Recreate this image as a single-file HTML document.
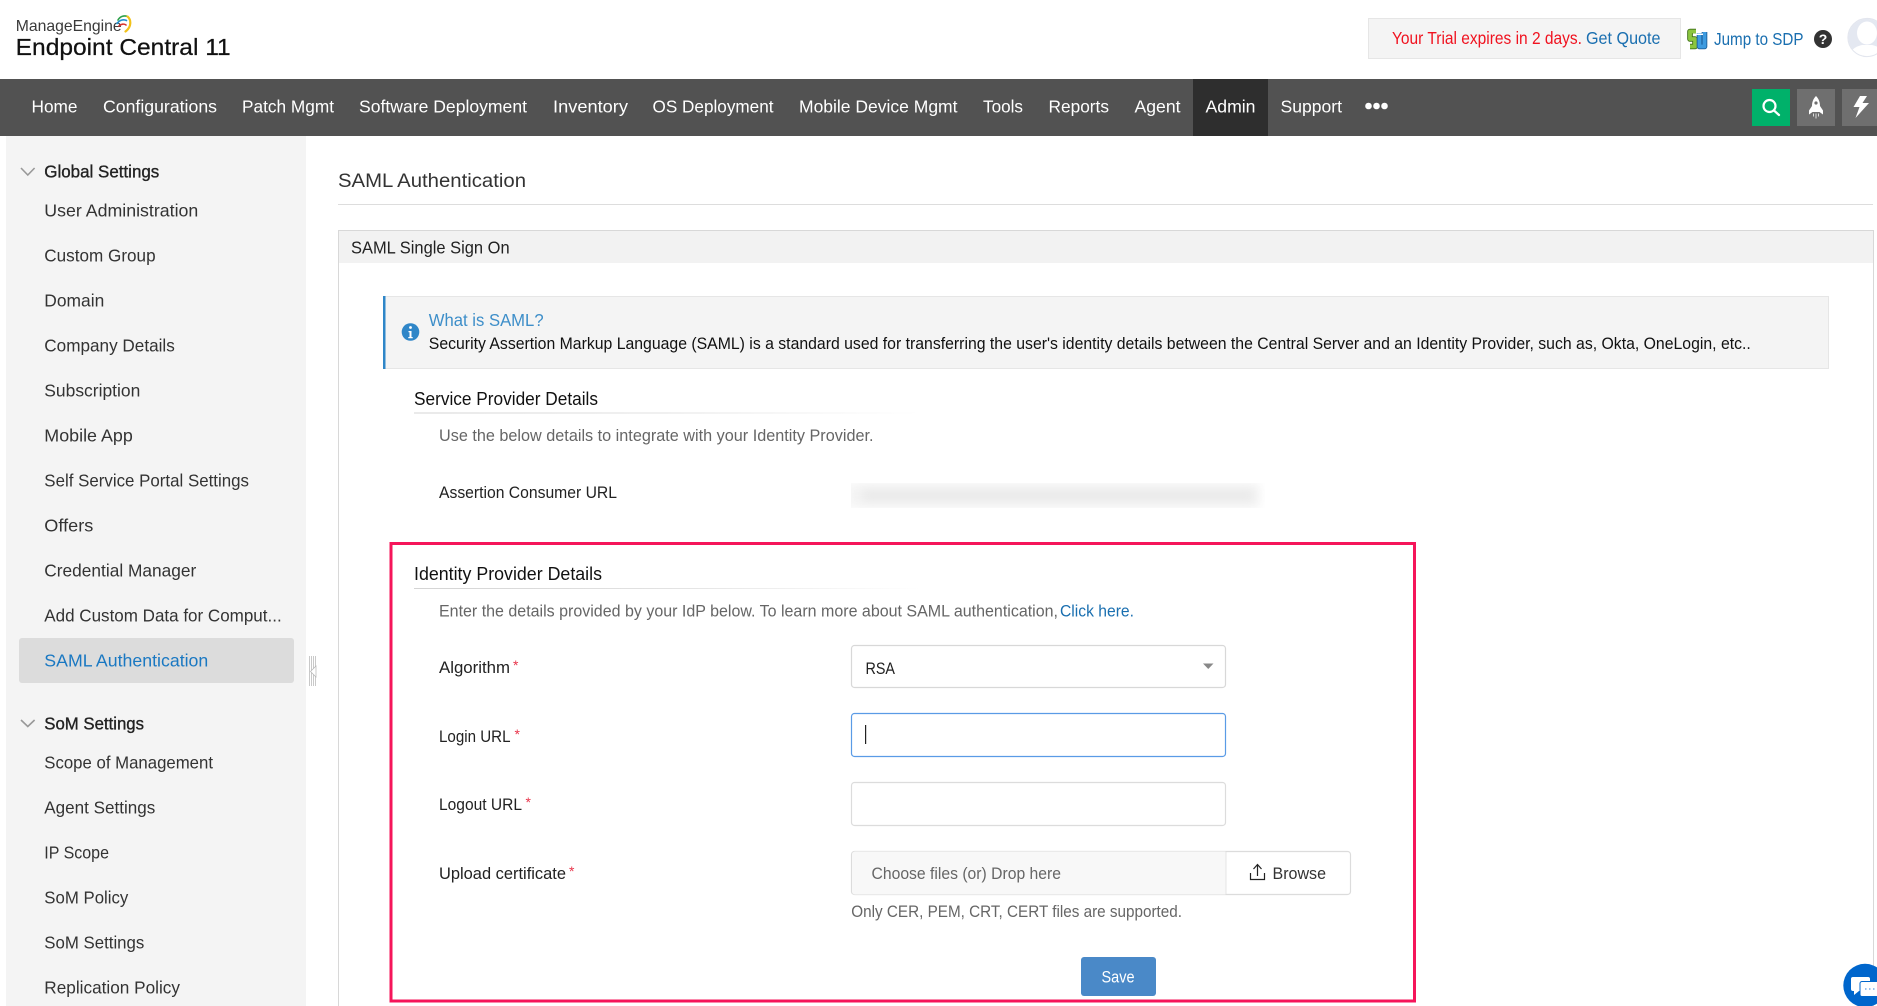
<!DOCTYPE html>
<html lang="en">
<head>
<meta charset="utf-8">
<title>SAML Authentication</title>
<style>
html,body{margin:0;padding:0;background:#fff;width:1877px;height:1006px;overflow:hidden}
svg{display:block;position:absolute;left:0;top:0}
text{font-family:"Liberation Sans",Arial,sans-serif;font-size:17.5px;fill:#2b2b2b}
.nav text{fill:#fff;font-size:17.5px}
.side text{fill:#333}
.side .b{fill:#222;stroke:#222;stroke-width:.35px}
.g{fill:#666!important}
.l{fill:#1a6fb0!important}
.st{fill:#e8344a!important;font-size:14px}
</style>
</head>
<body>
<svg width="1877" height="1006" viewBox="0 0 1877 1006" xmlns="http://www.w3.org/2000/svg">
<defs>
<linearGradient id="fade" x1="0" x2="1" y1="0" y2="0"><stop offset="0" stop-color="#d4d4d4"/><stop offset="0.5" stop-color="#e2e2e2"/><stop offset="1" stop-color="#fff"/></linearGradient>
<filter id="bl" x="-10%" y="-60%" width="120%" height="220%"><feGaussianBlur stdDeviation="5"/></filter>
<clipPath id="blc"><rect x="851" y="483" width="414" height="25"/></clipPath>
<clipPath id="av"><circle cx="1867" cy="37.5" r="18.6"/></clipPath>
</defs>

<!-- header -->
<rect width="1877" height="79" fill="#fff"/>
<text x="15.7" y="31" style="font-size:16px;fill:#3a3a3a" textLength="106" lengthAdjust="spacingAndGlyphs">ManageEngine</text>
<g fill="none" stroke-width="1.6" stroke-linecap="round">
<path d="M118 20C120 16.500 124 15 127.500 16.500" stroke="#2fa24a"/>
<path d="M117 23.500C119.500 20 123.500 19 126.500 20.500" stroke="#1f8fd0"/>
<path d="M119 26C121 24 124 23.500 126 25" stroke="#d8332f"/>
<path d="M127.500 16.500C131.500 20 131.500 27 125.500 31.500" stroke="#f2c21a" stroke-width="2.200"/>
</g>
<text x="15.7" y="55" style="font-size:23px;fill:#111;stroke:#111;stroke-width:.25px" textLength="215" lengthAdjust="spacingAndGlyphs">Endpoint Central 11</text>

<rect x="1368.500" y="18.500" width="312" height="40" fill="#f4f4f4" stroke="#e6e6e6"/>
<text x="1392" y="44" style="fill:#f0121f" textLength="190" lengthAdjust="spacingAndGlyphs">Your Trial expires in 2 days.</text>
<text x="1586" y="44" class="l" textLength="74.500" lengthAdjust="spacingAndGlyphs">Get Quote</text>

<!-- SDP icon -->
<g fill="none" stroke-linejoin="round">
<path d="M1696 31.500H1690V39H1695V46.500H1690" stroke="#3f6f18" stroke-width="5.600"/>
<path d="M1696 31.500H1690V39H1695V46.500H1690" stroke="#8cc63f" stroke-width="3.800"/>
<path d="M1704.500 32V46.500H1699.500V33" stroke="#1d5f9a" stroke-width="5.600"/>
<path d="M1704.500 32V46.500H1699.500V33" stroke="#3d9be0" stroke-width="3.800"/>
</g>
<rect x="1693" y="33.500" width="10" height="1.500" fill="#fff"/>
<text x="1714" y="45" class="l" textLength="89.500" lengthAdjust="spacingAndGlyphs">Jump to SDP</text>
<circle cx="1823" cy="39" r="9" fill="#333"/>
<text x="1823" y="44" text-anchor="middle" style="fill:#fff;font-size:14px;font-weight:bold">?</text>
<!-- avatar -->
<circle cx="1867" cy="37.500" r="19" fill="#fff" stroke="#e3e6ee" stroke-width="1.200"/>
<g clip-path="url(#av)">
<circle cx="1867" cy="37.500" r="18.600" fill="#e4e8f1"/>
<ellipse cx="1867" cy="33" rx="10" ry="11.500" fill="#fff"/>
<path d="M1848 57c3-9 10-11 14-12h10c4 1 11 3 14 12z" fill="#fff"/>
</g>

<!-- nav -->
<rect y="79" width="1877" height="57" fill="#525252"/>
<rect x="1193" y="79" width="75" height="57" fill="#2e2e2e"/>
<g class="nav">
<text x="31.500" y="112.500" textLength="46" lengthAdjust="spacingAndGlyphs">Home</text>
<text x="103" y="112.500" textLength="114" lengthAdjust="spacingAndGlyphs">Configurations</text>
<text x="242" y="112.500" textLength="92" lengthAdjust="spacingAndGlyphs">Patch Mgmt</text>
<text x="359" y="112.500" textLength="168" lengthAdjust="spacingAndGlyphs">Software Deployment</text>
<text x="553" y="112.500" textLength="75" lengthAdjust="spacingAndGlyphs">Inventory</text>
<text x="652.500" y="112.500" textLength="121" lengthAdjust="spacingAndGlyphs">OS Deployment</text>
<text x="799" y="112.500" textLength="158.500" lengthAdjust="spacingAndGlyphs">Mobile Device Mgmt</text>
<text x="983" y="112.500" textLength="40" lengthAdjust="spacingAndGlyphs">Tools</text>
<text x="1048.500" y="112.500" textLength="60.500" lengthAdjust="spacingAndGlyphs">Reports</text>
<text x="1134.500" y="112.500" textLength="46" lengthAdjust="spacingAndGlyphs">Agent</text>
<text x="1205.500" y="112.500" textLength="50" lengthAdjust="spacingAndGlyphs">Admin</text>
<text x="1280.500" y="112.500" textLength="61.500" lengthAdjust="spacingAndGlyphs">Support</text>
</g>
<circle cx="1368.500" cy="106" r="3.300" fill="#fff"/><circle cx="1376.500" cy="106" r="3.300" fill="#fff"/><circle cx="1384.500" cy="106" r="3.300" fill="#fff"/>

<rect x="1752" y="89" width="38" height="37" fill="#00b16a"/>
<circle cx="1769.500" cy="106" r="6" fill="none" stroke="#fff" stroke-width="2.200"/>
<path d="M1774 110.500l5 4.500" stroke="#fff" stroke-width="2.200" stroke-linecap="round"/>
<rect x="1797" y="89" width="38" height="37" fill="#6f6f6f"/>
<path d="M1816 96c3 3 4 6.500 4 10l3 4.500v4l-3.500-2.500h-7l-3.500 2.500v-4l3-4.500c0-3.500 1-7 4-10z" fill="#fff"/>
<circle cx="1816" cy="103" r="1.600" fill="#6f6f6f"/>
<path d="M1813.500 113.500v3M1816 113.500v5M1818.500 113.500v3" stroke="#ddd" stroke-width="1"/>
<rect x="1842" y="89" width="35" height="37" fill="#6f6f6f"/>
<path d="M1860 96h7l-4.500 7h6.500l-13.500 15 4-11h-6z" fill="#fff"/>

<!-- sidebar -->
<rect x="6" y="136" width="300" height="870" fill="#f4f4f4"/>
<rect x="19" y="638" width="275" height="45" rx="3" fill="#dcdcdc"/>
<path d="M21 168l6.800 7 6.800-7" fill="none" stroke="#999" stroke-width="1.600"/>
<path d="M21 720l6.800 6.500 6.800-6.500" fill="none" stroke="#999" stroke-width="1.600"/>
<g class="side">
<text class="b" x="44.300" y="177.500" textLength="115" lengthAdjust="spacingAndGlyphs">Global Settings</text>
<text x="44.300" y="216.700" textLength="154" lengthAdjust="spacingAndGlyphs">User Administration</text>
<text x="44.300" y="261.700" textLength="111.300" lengthAdjust="spacingAndGlyphs">Custom Group</text>
<text x="44.300" y="306.700" textLength="60" lengthAdjust="spacingAndGlyphs">Domain</text>
<text x="44.300" y="351.700" textLength="130.500" lengthAdjust="spacingAndGlyphs">Company Details</text>
<text x="44.300" y="396.700" textLength="96" lengthAdjust="spacingAndGlyphs">Subscription</text>
<text x="44.300" y="441.700" textLength="88.500" lengthAdjust="spacingAndGlyphs">Mobile App</text>
<text x="44.300" y="486.700" textLength="204.700" lengthAdjust="spacingAndGlyphs">Self Service Portal Settings</text>
<text x="44.300" y="531.700" textLength="49" lengthAdjust="spacingAndGlyphs">Offers</text>
<text x="44.300" y="576.700" textLength="152" lengthAdjust="spacingAndGlyphs">Credential Manager</text>
<text x="44.300" y="621.700" textLength="237.400" lengthAdjust="spacingAndGlyphs">Add Custom Data for Comput...</text>
<text x="44.300" y="666.700" textLength="164" lengthAdjust="spacingAndGlyphs" style="fill:#1a78c2">SAML Authentication</text>
<text class="b" x="44.300" y="729.700" textLength="99.700" lengthAdjust="spacingAndGlyphs">SoM Settings</text>
<text x="44.300" y="768.700" textLength="168.700" lengthAdjust="spacingAndGlyphs">Scope of Management</text>
<text x="44.300" y="813.700" textLength="111" lengthAdjust="spacingAndGlyphs">Agent Settings</text>
<text x="44.300" y="858.700" textLength="64.700" lengthAdjust="spacingAndGlyphs">IP Scope</text>
<text x="44.300" y="903.700" textLength="84" lengthAdjust="spacingAndGlyphs">SoM Policy</text>
<text x="44.300" y="948.700" textLength="100" lengthAdjust="spacingAndGlyphs">SoM Settings</text>
<text x="44.300" y="993.700" textLength="135.700" lengthAdjust="spacingAndGlyphs">Replication Policy</text>
</g>
<!-- splitter grip -->
<g stroke="#c9c9c9" stroke-width="1">
<path d="M309.500 656v30M311.500 656v30M313.500 656v30M315.500 656v30"/>
</g>
<path d="M316 666v11l-5.500-5.500z" fill="#fff" stroke="#b5b5b5" stroke-width=".7"/>

<!-- page title -->
<text x="338" y="187" style="font-size:19.500px;fill:#333" textLength="188" lengthAdjust="spacingAndGlyphs">SAML Authentication</text>
<rect x="338" y="204" width="1535" height="1" fill="#ddd"/>

<!-- panel -->
<rect x="338.500" y="230.500" width="1535" height="790" fill="#fff" stroke="#d8d8d8"/>
<rect x="339" y="231" width="1534" height="32" fill="#f2f2f2"/>
<text x="351" y="253.700" textLength="158.600" lengthAdjust="spacingAndGlyphs" style="fill:#222">SAML Single Sign On</text>

<!-- info -->
<rect x="383.500" y="296.500" width="1445" height="72" fill="#f4f4f4" stroke="#e6e6e6"/>
<rect x="383" y="296" width="2.500" height="73" fill="#2f86c8"/>
<circle cx="410.500" cy="332" r="8.800" fill="#2f86c8"/>
<circle cx="410.500" cy="327.500" r="1.400" fill="#fff"/>
<path d="M408.500 331h3v6h1.200v1.300h-4.400V337h1.200v-4.700h-1z" fill="#fff"/>
<text x="428.800" y="326" textLength="114.800" lengthAdjust="spacingAndGlyphs" style="fill:#3d8ec9">What is SAML?</text>
<text x="428.800" y="349" textLength="1322" lengthAdjust="spacingAndGlyphs" style="font-size:16.500px;fill:#111">Security Assertion Markup Language (SAML) is a standard used for transferring the user's identity details between the Central Server and an Identity Provider, such as, Okta, OneLogin, etc..</text>

<!-- service provider -->
<text x="414" y="405" textLength="184" lengthAdjust="spacingAndGlyphs" style="font-size:18px;fill:#111">Service Provider Details</text>
<rect x="414" y="412.500" width="506" height="1" fill="url(#fade)"/>
<text x="439" y="441.200" class="g" textLength="434.500" lengthAdjust="spacingAndGlyphs" style="font-size:16.500px">Use the below details to integrate with your Identity Provider.</text>
<text x="439" y="498" textLength="178" lengthAdjust="spacingAndGlyphs" style="font-size:16.500px;fill:#222">Assertion Consumer URL</text>
<g clip-path="url(#blc)">
<rect x="851" y="483" width="414" height="25" fill="#fff"/>
<rect x="846" y="483" width="414" height="25" fill="#f4f4f4" filter="url(#bl)"/>
<rect x="862" y="490" width="392" height="11" fill="#e9e9e9" filter="url(#bl)"/>
</g>

<!-- red box -->
<rect x="391" y="543.500" width="1023.500" height="457.500" fill="none" stroke="#f5155a" stroke-width="3"/>

<text x="414" y="580" textLength="188" lengthAdjust="spacingAndGlyphs" style="font-size:18px;fill:#111">Identity Provider Details</text>
<rect x="414" y="588" width="507" height="1" fill="url(#fade)"/>
<text x="439" y="616.700" class="g" textLength="619" lengthAdjust="spacingAndGlyphs" style="font-size:16.500px">Enter the details provided by your IdP below. To learn more about SAML authentication,</text>
<text x="1060" y="616.700" class="l" textLength="74" lengthAdjust="spacingAndGlyphs" style="font-size:16.500px">Click here.</text>

<text x="439" y="672.800" textLength="71" lengthAdjust="spacingAndGlyphs" style="font-size:16.500px;fill:#222">Algorithm</text>
<text x="513" y="670" class="st">*</text>
<rect x="851.500" y="645.500" width="374" height="42" rx="3" fill="#fff" stroke="#d8d8d8" stroke-width="1.200"/>
<text x="865.500" y="674" textLength="29.500" lengthAdjust="spacingAndGlyphs" style="font-size:16.500px;fill:#222">RSA</text>
<path d="M1203 663.500h10.500l-5.250 5.500z" fill="#888"/>

<text x="439" y="742" textLength="71.500" lengthAdjust="spacingAndGlyphs" style="font-size:16.500px;fill:#222">Login URL</text>
<text x="514.500" y="739" class="st">*</text>
<rect x="851.500" y="713.500" width="374" height="43" rx="3" fill="#fff" stroke="#5a9be6" stroke-width="1.200"/>
<rect x="865" y="725" width="1.200" height="19" fill="#222"/>

<text x="439" y="810" textLength="83" lengthAdjust="spacingAndGlyphs" style="font-size:16.500px;fill:#222">Logout URL</text>
<text x="525.500" y="807" class="st">*</text>
<rect x="851.500" y="782.500" width="374" height="43" rx="3" fill="#fff" stroke="#dcdcdc" stroke-width="1.200"/>

<text x="439" y="879" textLength="127" lengthAdjust="spacingAndGlyphs" style="font-size:16.500px;fill:#222">Upload certificate</text>
<text x="569" y="876" class="st">*</text>
<rect x="851.500" y="851.500" width="499" height="43" rx="3" fill="#fff" stroke="#dcdcdc" stroke-width="1.200"/>
<path d="M852 854.500a3 3 0 0 1 3-3h370.500v43H855a3 3 0 0 1-3-3z" fill="#f8f8f8"/>
<rect x="1225.500" y="852" width="1" height="42" fill="#e4e4e4"/>
<text x="871.500" y="879" class="g" textLength="189.500" lengthAdjust="spacingAndGlyphs" style="font-size:16.500px">Choose files (or) Drop here</text>
<path d="M1250.500 873v6.500h14V873M1257.500 876v-11M1253.500 869l4-4.500 4 4.500" fill="none" stroke="#222" stroke-width="1.200"/>
<text x="1272.500" y="879" textLength="53.500" lengthAdjust="spacingAndGlyphs" style="font-size:16.500px;fill:#333">Browse</text>
<text x="851.300" y="917" class="g" textLength="330.700" lengthAdjust="spacingAndGlyphs" style="font-size:16.500px">Only CER, PEM, CRT, CERT files are supported.</text>

<rect x="1081" y="957" width="75" height="39" rx="3" fill="#4a89c8"/>
<text x="1101.500" y="982.700" textLength="33" lengthAdjust="spacingAndGlyphs" style="font-size:16.500px;fill:#fff">Save</text>

<!-- chat -->
<circle cx="1865" cy="985.500" r="21.700" fill="#0066cc"/>
<path d="M1853 977h15a2 2 0 0 1 2 2v10a2 2 0 0 1-2 2h-9l-5 4v-4h-1a2 2 0 0 1-2-2v-10a2 2 0 0 1 2-2z" fill="#fff"/>
<rect x="1860" y="981.500" width="19" height="15" rx="2" fill="#fff" stroke="#0066cc" stroke-width="1"/>
<path d="M1865 989h1.500M1869 989h1.500M1873 989h1.500" stroke="#5a9be6" stroke-width="1.300"/>
</svg>
</body>
</html>
